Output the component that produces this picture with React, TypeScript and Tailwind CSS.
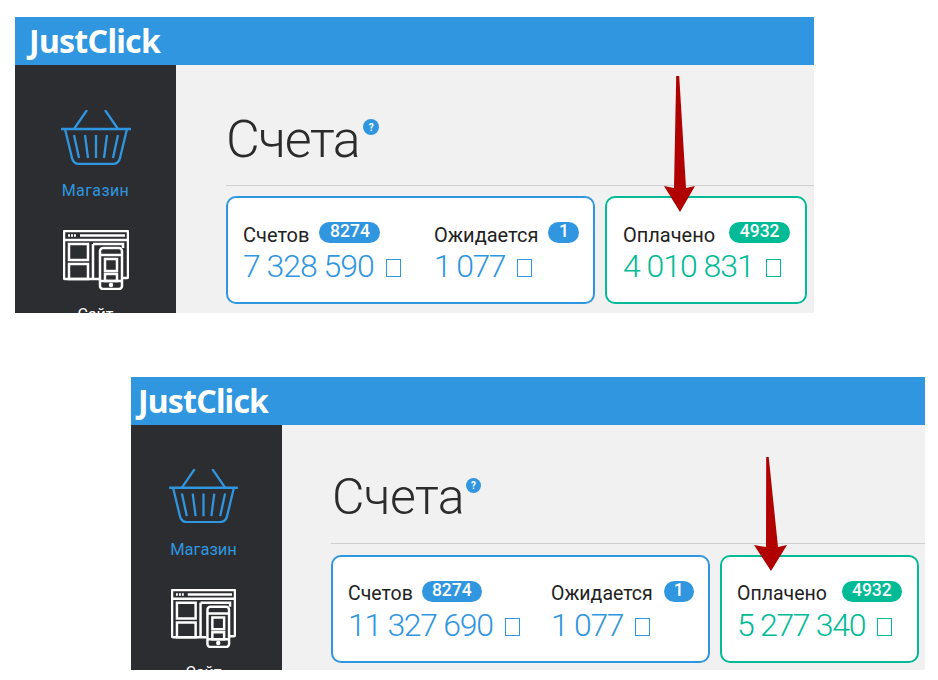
import React from 'react';

function BasketIcon({ className }: { className: string }) {
  return (
    <svg viewBox="0 0 70 55" fill="none" stroke="#2f96df" strokeWidth="2.300" className={className}>
      <path d="M13 19 26 0M57 19 44 0" />
      <path d="M0 19h70" strokeWidth="2.600" />
      <path d="M4 19 11 48q1.500 6 7 6h34q5.500 0 7-6l7-29" />
      <path d="M13 25l5 23M24 25l3 23M35 25v23M46 25l-3 23M57 25l-5 23" />
    </svg>
  );
}

function SiteIcon({ className }: { className: string }) {
  return (
    <svg viewBox="0 0 66 60" fill="none" stroke="#fff" strokeWidth="2.500" className={className}>
      <path d="M36 49H2q-1 0-1-1V2q0-1 1-1h62q1 0 1 1v45q0 1-1 1h-4" />
      <path d="M1 10h64" />
      <path d="M17 5.500h45" />
      <path d="M5 5.500h8" strokeDasharray="2 1" />
      <path d="M6 14h19v16H6zM6 34h19v15H6zM30 14h30v4M30 14v35" />
      <rect x="37" y="18" width="22" height="41" rx="3" fill="#2c2d31" />
      <path d="M37 25h22M37 51h22" />
      <path d="M42 29h12v12H42zM42 44h12v7H42z" />
      <circle cx="48" cy="55" r="1" fill="#fff" />
    </svg>
  );
}

function Badge({ value, color, width }: { value: string; color: string; width: string }) {
  return (
    <span className={`${color} ${width} -mt-[6px] inline-flex h-[21px] items-center justify-center rounded-full text-[17.5px] font-medium leading-none text-white`}>
      {value}
    </span>
  );
}

function Stat({ label, count, amount, green, gap, badgeWidth, compact, tight }: {
  label: string;
  count: string;
  amount: string;
  green?: boolean;
  gap: string;
  badgeWidth: string;
  compact?: boolean;
  tight?: boolean;
}) {
  return (
    <div className="flex flex-col pt-[8px]">
      <div className={`flex items-center ${gap}`}>
        <span className={`whitespace-nowrap leading-[24px] text-[#222] ${compact ? 'text-[19.500px]' : 'text-[20px]'}`}>{label}</span>
        <Badge value={count} width={badgeWidth} color={green ? 'bg-[#00bb96]' : 'bg-[#2f96df]'} />
      </div>
      <div className={`flex items-center whitespace-nowrap text-[32px] font-light leading-[38px] ${tight ? 'tracking-[-1.6px]' : compact ? 'tracking-[-1.3px]' : 'tracking-[-1px]'} ${green ? 'text-[#00bb96]' : 'text-[#2f96df]'}`}>
        {amount}
        <span className={`ml-[12px] mt-[3px] inline-block h-[18px] w-[15px] shrink-0 border ${green ? 'border-[#00bb96]' : 'border-[#2f96df]'}`} />
      </div>
    </div>
  );
}

export default function App() {
  return (
    <div className="relative min-h-[680px] overflow-hidden bg-white pt-[17px] font-['Roboto',sans-serif]">
      {/* Top screenshot */}
      <section className="relative ml-[15px] flex h-[296px] w-[799px] flex-col overflow-hidden">
        <header className="flex h-[48px] shrink-0 items-center bg-[#2f96df] pl-[14px]">
          <span className="font-['Noto_Sans',sans-serif] text-[32px] font-bold leading-none tracking-[-0.7px] text-white">JustClick</span>
        </header>
        <div className="flex min-h-0 flex-1">
          <aside className="flex w-[161px] flex-col items-center bg-[#2c2d31] pt-[45px]">
            <BasketIcon className="h-[55px] w-[70px] shrink-0" />
            <span className="mt-[16px] text-[16px] leading-[20px] tracking-[0.4px] text-[#2f96df]">Магазин</span>
            <SiteIcon className="mt-[29px] h-[60px] w-[66px] shrink-0" />
            <span className="mt-[15px] text-[16px] leading-[20px] text-white">Сайт</span>
          </aside>
          <main className="flex-1 bg-[#f1f1f1] pl-[50px]">
            <div className="flex h-[120px] items-start pt-[44px]">
              <h1 className="text-[52px] font-light leading-[61px] tracking-[-1.4px] text-[#2b2b2b]">Счета</h1>
              <span className="ml-[4px] mt-[10px] flex h-[16px] w-[16px] items-center justify-center rounded-full bg-[#2f96df] text-[10px] font-bold text-white">?</span>
            </div>
            <div className="h-px bg-[#cfcfcf]" />
            <div className="mt-[10px] flex gap-[10px]">
              <div className="flex h-[108px] w-[369px] items-center gap-[38px] rounded-[10px] border-2 border-[#2f96df] bg-white pl-[15px]">
                <div className="w-[153px]">
                  <Stat label="Счетов" count="8274" amount="7 328 590" gap="gap-[10px]" badgeWidth="w-[61px]" />
                </div>
                <Stat label="Ожидается" count="1" amount="1 077" gap="gap-[10px]" badgeWidth="w-[31px]" tight />
              </div>
              <div className="flex h-[108px] w-[202px] items-center rounded-[10px] border-2 border-[#00bb96] bg-white pl-[16px]">
                <Stat label="Оплачено" count="4932" amount="4 010 831" green gap="gap-[14px]" badgeWidth="w-[61px]" />
              </div>
            </div>
          </main>
        </div>
        <svg className="absolute left-[648px] top-[57px] h-[140px] w-[32px]" viewBox="0 0 32 140">
          <path d="M13.200 2h3L23 114l9-2-15 26L1 112l10 2z" fill="#b00000" />
        </svg>
      </section>

      {/* Bottom screenshot */}
      <section className="relative ml-[131px] mt-[64px] flex h-[293px] w-[794px] flex-col overflow-hidden">
        <header className="flex h-[48px] shrink-0 items-center bg-[#2f96df] pl-[7px]">
          <span className="font-['Noto_Sans',sans-serif] text-[32px] font-bold leading-none tracking-[-0.8px] text-white">JustClick</span>
        </header>
        <div className="flex min-h-0 flex-1">
          <aside className="flex w-[151px] flex-col items-center bg-[#2c2d31] pr-[6px] pt-[44px]">
            <BasketIcon className="h-[54px] w-[69px] shrink-0" />
            <span className="mt-[17px] text-[16.500px] leading-[20px] text-[#2f96df]">Магазин</span>
            <SiteIcon className="mt-[29px] h-[59px] w-[65px] shrink-0" />
            <span className="mt-[15px] text-[16px] leading-[20px] text-white">Сайт</span>
          </aside>
          <main className="flex-1 bg-[#f1f1f1] pl-[49px]">
            <div className="flex h-[118px] items-start pt-[43px]">
              <h1 className="ml-[1px] text-[50px] font-light leading-[59px] tracking-[-0.6px] text-[#2b2b2b]">Счета</h1>
              <span className="ml-[2px] mt-[10px] flex h-[15px] w-[15px] items-center justify-center rounded-full bg-[#2f96df] text-[10px] font-bold text-white">?</span>
            </div>
            <div className="h-px bg-[#cfcfcf]" />
            <div className="mt-[11px] flex gap-[10px]">
              <div className="flex h-[108px] w-[379px] items-center gap-[59px] rounded-[10px] border-2 border-[#2f96df] bg-white pl-[15px]">
                <div className="w-[144px]">
                  <Stat label="Счетов" count="8274" amount="11 327 690" gap="gap-[9px]" badgeWidth="w-[60px]" compact />
                </div>
                <Stat label="Ожидается" count="1" amount="1 077" gap="gap-[11px]" badgeWidth="w-[30px]" compact />
              </div>
              <div className="flex h-[108px] w-[199px] items-center rounded-[10px] border-2 border-[#00bb96] bg-white pl-[15px]">
                <Stat label="Оплачено" count="4932" amount="5 277 340" green gap="gap-[15px]" badgeWidth="w-[60px]" compact />
              </div>
            </div>
          </main>
        </div>
        <svg className="absolute left-[623px] top-[79px] h-[116px] w-[33px]" viewBox="0 0 33 116">
          <path d="M12.200 1h2.500L24 91l9-2-16 26L0 89l12 2z" fill="#b00000" />
        </svg>
      </section>
    </div>
  );
}
